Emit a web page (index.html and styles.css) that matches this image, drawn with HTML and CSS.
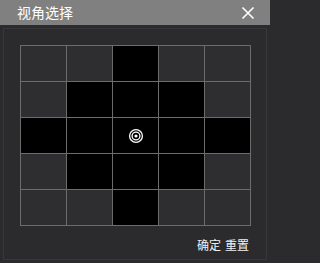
FILE: index.html
```html
<!DOCTYPE html>
<html>
<head>
<meta charset="utf-8">
<link rel="stylesheet" href="styles.css">
</head>
<body>
<div class="window">
  <div class="titlebar">
    <span class="title">视角选择</span>
    <svg class="close" width="14" height="14" viewBox="0 0 14 14"><path d="M1.5 1.5 L12.5 12.5 M12.5 1.5 L1.5 12.5" stroke="#fff" stroke-width="1.6" fill="none"/></svg>
  </div>
  <div class="panel">
    <div class="grid">
      <div class="cell"></div><div class="cell"></div><div class="cell on"></div><div class="cell"></div><div class="cell"></div>
      <div class="cell"></div><div class="cell on"></div><div class="cell on"></div><div class="cell on"></div><div class="cell"></div>
      <div class="cell on"></div><div class="cell on"></div>
      <div class="cell on center">
        <svg class="marker" width="16" height="16" viewBox="0 0 16 16">
          <circle cx="8" cy="8" r="6.4" stroke="#fff" stroke-width="1.3" fill="none"/>
          <circle cx="8" cy="8" r="3.9" stroke="#fff" stroke-width="1.3" fill="none"/>
          <circle cx="8" cy="8" r="1.6" fill="#fff"/>
        </svg>
      </div>
      <div class="cell on"></div><div class="cell on"></div>
      <div class="cell"></div><div class="cell on"></div><div class="cell on"></div><div class="cell on"></div><div class="cell"></div>
      <div class="cell"></div><div class="cell"></div><div class="cell on"></div><div class="cell"></div><div class="cell"></div>
    </div>
    <div class="actions">
      <span class="btn">确定</span>
      <span class="btn">重置</span>
    </div>
  </div>
</div>
</body>
</html>
```
FILE: styles.css
```css
html, body {
  margin: 0;
  padding: 0;
  background: #2b2b2d;
}
.window {
  width: 270px;
  height: 263px;
  display: flex;
  flex-direction: column;
  font-family: "Noto Sans CJK SC", "Noto Sans", sans-serif;
  color: #fff;
}
.titlebar {
  height: 25px;
  background: #808080;
  display: flex;
  align-items: center;
  justify-content: space-between;
  padding: 0 17px 0 17px;
  box-sizing: border-box;
}
.title {
  font-size: 14px;
  line-height: 25px;
  letter-spacing: 0px;
}
.close {
  display: block;
  margin-right: -2px;
}
.panel {
  margin: 3px 3px 3px 3px;
  border: 1px solid #38383a;
  flex: 1;
  display: flex;
  flex-direction: column;
  padding: 16px 17px 0 16px;
}
.grid {
  display: grid;
  grid-template-columns: repeat(5, 45px);
  grid-template-rows: repeat(5, 35px);
  gap: 1px;
  padding: 1px;
  background: #6c6c6c;
  width: max-content;
}
.cell {
  background: #2e2e30;
}
.cell.on {
  background: #000;
}
.center {
  position: relative;
  display: flex;
  align-items: center;
  justify-content: center;
}
.marker {
  display: block;
}
.actions {
  display: flex;
  justify-content: flex-end;
  gap: 4px;
  margin-top: 10px;
}
.btn {
  font-size: 12px;
  line-height: 17px;
  color: #f2f2f2;
}
```
